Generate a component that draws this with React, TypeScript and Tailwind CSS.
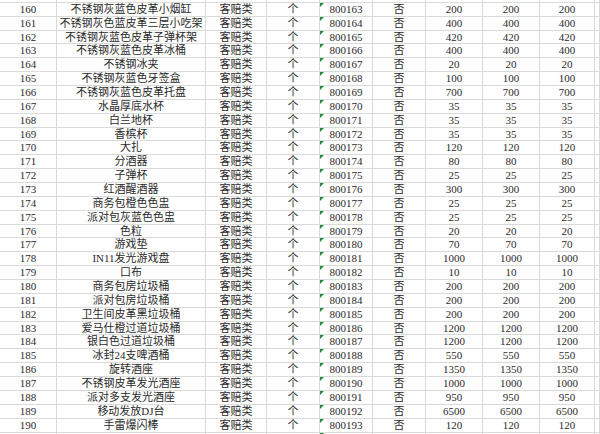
import React from 'react';

type Row = [number, string, string, string];

const rows: Row[] = [
  [160, '不锈钢灰蓝色皮革小烟缸', '800163', '200'],
  [161, '不锈钢灰色蓝皮革三层小吃架', '800164', '400'],
  [162, '不锈钢灰蓝色皮革子弹杯架', '800165', '420'],
  [163, '不锈钢灰蓝色皮革冰桶', '800166', '400'],
  [164, '不锈钢冰夹', '800167', '20'],
  [165, '不锈钢灰蓝色牙签盒', '800168', '100'],
  [166, '不锈钢灰蓝色皮革托盘', '800169', '700'],
  [167, '水晶厚底水杯', '800170', '35'],
  [168, '白兰地杯', '800171', '35'],
  [169, '香槟杯', '800172', '35'],
  [170, '大扎', '800173', '120'],
  [171, '分酒器', '800174', '80'],
  [172, '子弹杯', '800175', '25'],
  [173, '红酒醒酒器', '800176', '300'],
  [174, '商务包橙色色盅', '800177', '25'],
  [175, '派对包灰蓝色色盅', '800178', '25'],
  [176, '色粒', '800179', '20'],
  [177, '游戏垫', '800180', '70'],
  [178, 'IN11发光游戏盘', '800181', '1000'],
  [179, '口布', '800182', '10'],
  [180, '商务包房垃圾桶', '800183', '200'],
  [181, '派对包房垃圾桶', '800184', '200'],
  [182, '卫生间皮革黑垃圾桶', '800185', '200'],
  [183, '爱马仕橙过道垃圾桶', '800186', '1200'],
  [184, '银白色过道垃圾桶', '800187', '1200'],
  [185, '冰封24支啤酒桶', '800188', '550'],
  [186, '旋转酒座', '800189', '1350'],
  [187, '不锈钢皮革发光酒座', '800190', '1000'],
  [188, '派对多支发光酒座', '800191', '950'],
  [189, '移动发放DJ台', '800192', '6500'],
  [190, '手雷爆闪棒', '800193', '120'],
];

const gridCols =
  'grid grid-cols-[57px_149px_61px_53px_53px_53px_57px_57px_55px_1fr]';

function Cell({ children, tick }: { children?: React.ReactNode; tick?: boolean }) {
  return (
    <div className="relative flex items-center justify-center overflow-hidden whitespace-nowrap border-r border-b border-[#dadada] leading-none">
      {tick && (
        <span className="absolute left-0 top-0 h-0 w-0 border-t-[4px] border-r-[4px] border-t-[#1f8a3b] border-r-transparent" />
      )}
      {children}
    </div>
  );
}

function EmptyRow({ className = '' }: { className?: string }) {
  return (
    <div className={`${gridCols} h-[13.87px] ${className}`}>
      {Array.from({ length: 10 }).map((_, i) => (
        <Cell key={i} tick={i === 4} />
      ))}
    </div>
  );
}

export default function App() {
  return (
    <div
      className="h-[434px] w-[600px] overflow-hidden bg-white text-[11px] text-[#2a2a2a]"
      style={{ fontFamily: '"Liberation Serif", "Noto Sans CJK SC", serif' }}
    >
      {/* partial row scrolled off the top */}
      <EmptyRow className="-mt-[11px]" />

      {rows.map(([no, name, code, price]) => (
        <div key={no} className={`${gridCols} h-[13.87px]`}>
          <Cell>{no}</Cell>
          <Cell>{name}</Cell>
          <Cell>客赔类</Cell>
          <Cell>个</Cell>
          <Cell tick>{code}</Cell>
          <Cell>否</Cell>
          <Cell>{price}</Cell>
          <Cell>{price}</Cell>
          <Cell>{price}</Cell>
          <Cell />
        </div>
      ))}

      <EmptyRow />
    </div>
  );
}
